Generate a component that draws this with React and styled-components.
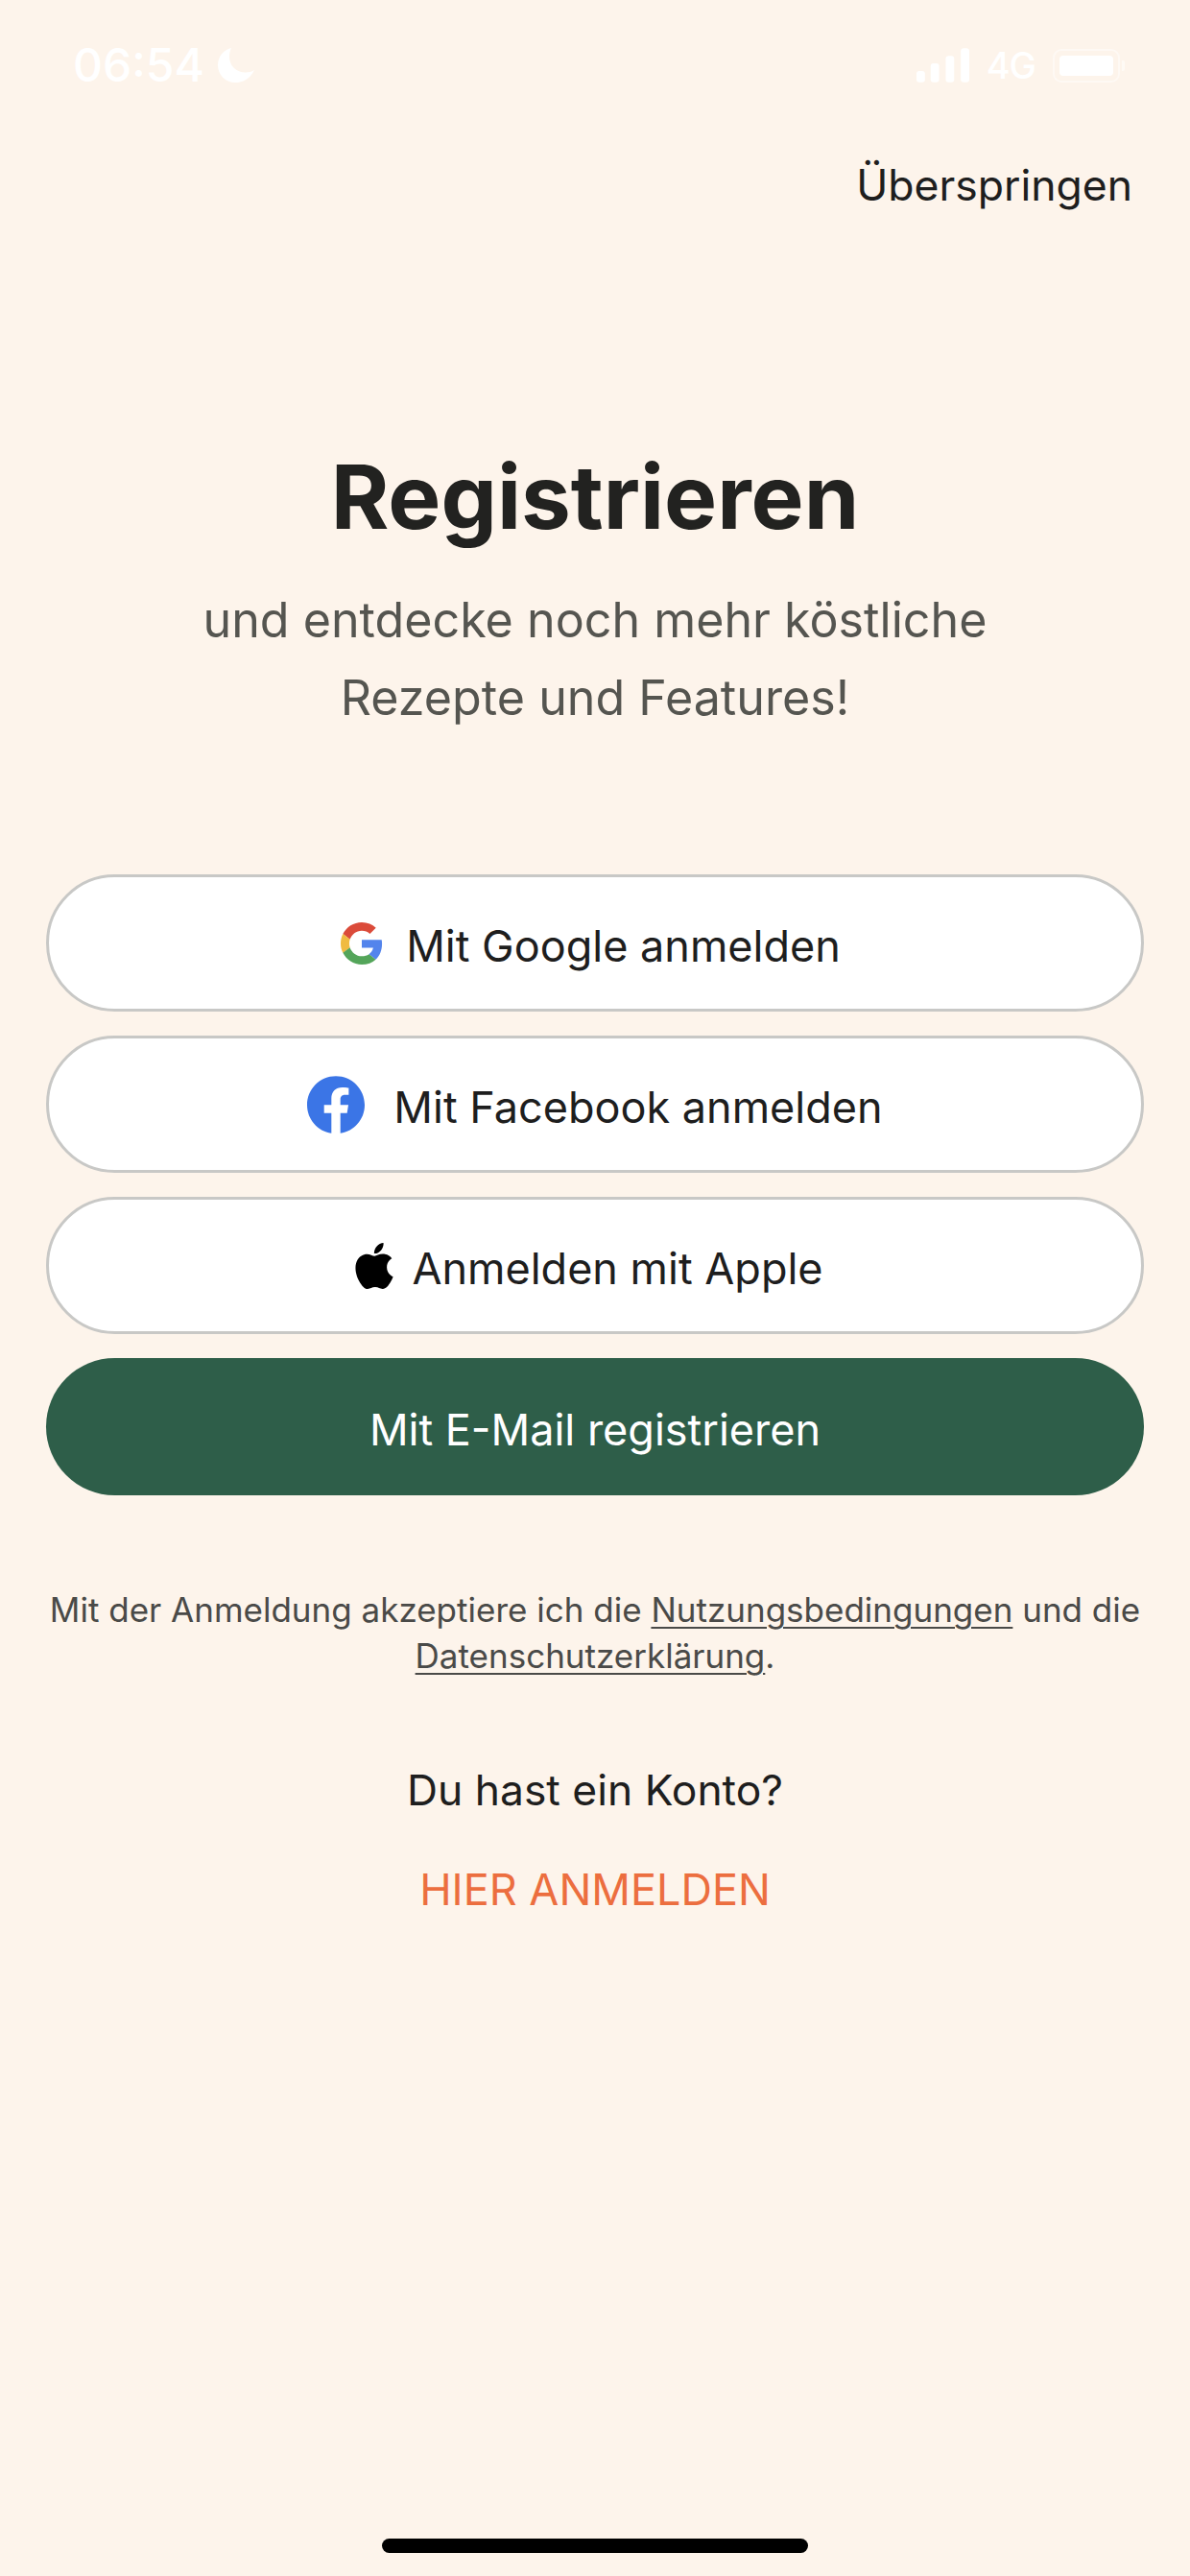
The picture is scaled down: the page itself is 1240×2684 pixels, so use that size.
import React from 'react';
import styled, { createGlobalStyle } from 'styled-components';

const GlobalStyle = createGlobalStyle`
  html, body {
    margin: 0;
    padding: 0;
    background: #fdf4eb;
  }
  * {
    box-sizing: border-box;
  }
`;

const Page = styled.div`
  width: 1240px;
  height: 2684px;
  display: flex;
  flex-direction: column;
  background: #fdf4eb;
  color: #1e1e1e;
  font-family: Inter, 'Liberation Sans', sans-serif;
`;

const StatusBar = styled.div`
  height: 36px;
  margin-top: 50px;
  padding: 0 73px 0 76px;
  display: flex;
  align-items: center;
  justify-content: space-between;
  color: #fff;
`;

const StatusGroup = styled.div`
  display: flex;
  align-items: center;
  gap: ${(props) => props.gap}px;
`;

const Clock = styled.span`
  font-size: 48px;
  line-height: 36px;
  font-weight: 500;
`;

const Network = styled.span`
  font-size: 38px;
  line-height: 36px;
  font-weight: 500;
  letter-spacing: -1px;
`;

const Battery = styled.div`
  position: relative;
  width: 70px;
  height: 35px;
  padding: 5px;
  border-radius: 9px;
  border: 2px solid rgba(255, 255, 255, 0.45);
  &::before {
    content: '';
    display: block;
    height: 100%;
    border-radius: 4px;
    background: #fff;
  }
  &::after {
    content: '';
    position: absolute;
    right: -7px;
    top: 10px;
    width: 3px;
    height: 11px;
    border-radius: 0 2px 2px 0;
    background: rgba(255, 255, 255, 0.5);
  }
`;

const SkipRow = styled.div`
  display: flex;
  justify-content: flex-end;
  padding: 82px 60px 0 0;
`;

const Skip = styled.span`
  font-size: 44.500px;
  line-height: 50px;
`;

const Intro = styled.div`
  margin-top: 249px;
  display: flex;
  flex-direction: column;
  align-items: center;
  text-align: center;
`;

const Title = styled.h1`
  margin: 0;
  font-size: 92.500px;
  line-height: 100px;
  font-weight: 700;
  color: #222220;
`;

const Subtitle = styled.p`
  margin: 38px 0 0;
  font-size: 50.200px;
  line-height: 81px;
  font-weight: 400;
  color: #555550;
`;

const Actions = styled.div`
  margin-top: 144px;
  padding: 0 48px;
  display: flex;
  flex-direction: column;
  gap: 25px;
`;

const Button = styled.button`
  height: 143px;
  width: 100%;
  padding: 0 ${(props) => props.offset || 0}px 0 0;
  display: flex;
  align-items: center;
  justify-content: center;
  gap: ${(props) => props.gap || 0}px;
  border-radius: 72px;
  border: ${(props) => (props.primary ? 'none' : '3px solid #c8c8c6')};
  background: ${(props) => (props.primary ? '#2e5e49' : '#fff')};
  color: ${(props) => (props.primary ? '#fff' : '#1e1e1e')};
  font-family: inherit;
  font-size: 45px;
  font-weight: 400;
`;

const ButtonLabel = styled.span`
  padding-top: 6px;
`;

const Legal = styled.p`
  margin: 95px 0 0;
  text-align: center;
  font-size: 35px;
  line-height: 48px;
  color: #4a4a48;
`;

const LegalLink = styled.span`
  text-decoration: underline;
  text-underline-offset: 5px;
  text-decoration-thickness: 2px;
`;

const Account = styled.div`
  margin-top: 89px;
  display: flex;
  flex-direction: column;
  align-items: center;
  gap: 50px;
`;

const AccountText = styled.span`
  font-size: 44.400px;
  line-height: 54px;
`;

const LoginLink = styled.span`
  font-size: 45px;
  line-height: 54px;
  color: #ec6e3f;
`;

const HomeIndicator = styled.div`
  width: 444px;
  height: 15px;
  margin: auto auto 24px;
  border-radius: 8px;
  background: #000;
`;

const SignalBars = () => (
  <svg width="55" height="36" viewBox="0 0 56 36" fill="#fff">
    <rect x="0" y="24" width="9" height="12" rx="3" />
    <rect x="15" y="16" width="9" height="20" rx="3" />
    <rect x="31" y="8" width="9" height="28" rx="3" />
    <rect x="47" y="0" width="9" height="36" rx="3" />
  </svg>
);

const MoonIcon = () => (
  <svg width="38" height="36" viewBox="0 0 38 36" fill="#fff">
    <path d="M14 0C5.500 2 0 9.500 0 18c0 10 8 18 18 18 9 0 16.500-5 20-13-3 1.800-6 2.500-9 2.500C19 25.500 12 18.500 12 9c0-3.200.7-6.200 2-9z" />
  </svg>
);

const GoogleIcon = () => (
  <svg width="44" height="44" viewBox="0 0 48 48">
    <path fill="#db4b3a" d="M24 9.500c3.540 0 6.710 1.220 9.210 3.600l6.850-6.850C35.900 2.380 30.470 0 24 0 14.620 0 6.510 5.380 2.560 13.220l7.980 6.190C12.430 13.720 17.740 9.500 24 9.500z" />
    <path fill="#5384ec" d="M46.980 24.550c0-1.570-.15-3.090-.38-4.550H24v9.020h12.940c-.58 2.960-2.260 5.480-4.780 7.180l7.730 6c4.510-4.180 7.090-10.360 7.090-17.650z" />
    <path fill="#f0bb41" d="M10.530 28.590c-.5-1.450-.78-2.990-.78-4.590s.27-3.140.78-4.590l-7.980-6.190C.92 16.460 0 20.120 0 24c0 3.880.92 7.540 2.560 10.780l7.970-6.190z" />
    <path fill="#54a55a" d="M24 48c6.480 0 11.930-2.130 15.890-5.810l-7.730-6c-2.150 1.450-4.920 2.300-8.160 2.300-6.260 0-11.570-4.220-13.470-9.910l-7.980 6.190C6.510 42.620 14.620 48 24 48z" />
  </svg>
);

const FacebookIcon = () => (
  <svg width="60" height="60" viewBox="0 0 24 24">
    <path fill="#3b75e6" d="M24 12.073c0-6.627-5.373-12-12-12s-12 5.373-12 12c0 5.990 4.388 10.954 10.125 11.854v-8.385H7.078v-3.470h3.047V9.430c0-3.007 1.792-4.669 4.533-4.669 1.312 0 2.686.235 2.686.235v2.953H15.830c-1.491 0-1.956.925-1.956 1.874v2.250h3.328l-.532 3.470h-2.796v8.385C19.612 23.027 24 18.062 24 12.073z" />
  </svg>
);

const AppleIcon = () => (
  <svg width="48" height="48" viewBox="0 0 24 24" fill="#000">
    <path d="M12.152 6.896c-.948 0-2.415-1.078-3.960-1.040-2.040.027-3.910 1.183-4.961 3.014-2.117 3.675-.546 9.103 1.519 12.090 1.013 1.454 2.208 3.090 3.792 3.039 1.520-.065 2.090-.987 3.935-.987 1.831 0 2.350.987 3.960.948 1.637-.026 2.676-1.480 3.676-2.948 1.156-1.688 1.636-3.325 1.662-3.415-.039-.013-3.182-1.221-3.220-4.857-.026-3.040 2.480-4.494 2.597-4.559-1.429-2.090-3.623-2.324-4.390-2.376-2-.156-3.675 1.090-4.610 1.090zM15.530 3.830c.843-1.012 1.400-2.427 1.245-3.830-1.207.052-2.662.805-3.532 1.818-.78.896-1.454 2.338-1.273 3.714 1.338.104 2.715-.688 3.559-1.701" />
  </svg>
);

const App = () => {
  return (
    <Page>
      <GlobalStyle />
      <StatusBar>
        <StatusGroup gap={14}>
          <Clock>06:54</Clock>
          <MoonIcon />
        </StatusGroup>
        <StatusGroup gap={18}>
          <SignalBars />
          <Network>4G</Network>
          <Battery />
        </StatusGroup>
      </StatusBar>
      <SkipRow>
        <Skip>Überspringen</Skip>
      </SkipRow>
      <Intro>
        <Title>Registrieren</Title>
        <Subtitle>
          und entdecke noch mehr köstliche
          <br />
          Rezepte und Features!
        </Subtitle>
      </Intro>
      <Actions>
        <Button gap={24} offset={9}>
          <GoogleIcon />
          <ButtonLabel>Mit Google anmelden</ButtonLabel>
        </Button>
        <Button gap={30}>
          <FacebookIcon />
          <ButtonLabel>Mit Facebook anmelden</ButtonLabel>
        </Button>
        <Button gap={15} offset={16}>
          <AppleIcon />
          <ButtonLabel>Anmelden mit Apple</ButtonLabel>
        </Button>
        <Button primary>
          <ButtonLabel>Mit E-Mail registrieren</ButtonLabel>
        </Button>
      </Actions>
      <Legal>
        Mit der Anmeldung akzeptiere ich die <LegalLink>Nutzungsbedingungen</LegalLink> und die
        <br />
        <LegalLink>Datenschutzerklärung</LegalLink>.
      </Legal>
      <Account>
        <AccountText>Du hast ein Konto?</AccountText>
        <LoginLink>HIER ANMELDEN</LoginLink>
      </Account>
      <HomeIndicator />
    </Page>
  );
};

export default App;
